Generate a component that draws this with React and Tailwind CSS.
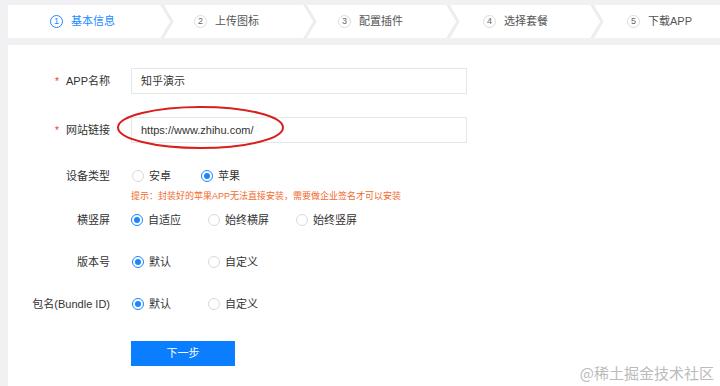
import React from "react";

const FONT = { fontFamily: '"Liberation Sans", "Noto Sans CJK SC", sans-serif' };

function Chevron() {
  return (
    <svg width="14" height="33" viewBox="0 0 14 33" className="shrink-0">
      <polyline points="1.5,-1 12,16.5 1.5,34" fill="none" stroke="#ededef" strokeWidth="3" />
    </svg>
  );
}

function Step({ n, label, active, className }) {
  return (
    <div className={"flex items-center h-full " + className}>
      <span
        className={
          "w-[13px] h-[13px] rounded-full border flex items-center justify-center text-[9px] leading-none " +
          (active ? "border-[#1a8cff] text-[#1a8cff]" : "border-[#dcdcdc] text-[#666]")
        }
      >
        {n}
      </span>
      <span className={"ml-[8px] text-[11px] " + (active ? "text-[#1a8cff]" : "text-[#555]")}>{label}</span>
    </div>
  );
}

function Radio({ checked, label }) {
  return (
    <div className="flex items-center">
      <span
        className={
          "w-[12px] h-[12px] rounded-full border bg-white flex items-center justify-center " +
          (checked ? "border-[#1a85ff]" : "border-[#dadada]")
        }
      >
        {checked && <span className="w-[6px] h-[6px] rounded-full bg-[#1a85ff]" />}
      </span>
      <span className="ml-[5px] text-[11px] text-[#333]">{label}</span>
    </div>
  );
}

function Label({ req, children }) {
  return (
    <div className="w-[102px] shrink-0 text-right text-[11px] text-[#333] pr-0">
      {req && <span className="text-[#f0302f] mr-[7px] text-[10px]">*</span>}
      {children}
    </div>
  );
}

export default function App() {
  return (
    <div className="w-[720px] h-[386px] overflow-hidden bg-[#f1f1f3] relative" style={FONT}>
      {/* Steps bar */}
      <div className="ml-[8px] mt-[5px] h-[33px] bg-white flex">
        <Step n="1" label="基本信息" active className="w-[152px] pl-[42px]" />
        <Chevron />
        <Step n="2" label="上传图标" className="w-[129px] pl-[20px]" />
        <Chevron />
        <Step n="3" label="配置插件" className="w-[129px] pl-[21px]" />
        <Chevron />
        <Step n="4" label="选择套餐" className="w-[130px] pl-[23px]" />
        <Chevron />
        <Step n="5" label="下载APP" className="flex-1 pl-[23px]" />
      </div>

      {/* Content panel */}
      <div className="ml-[8px] mt-[7px] h-[400px] bg-white pt-[23px] relative">
        <div className="flex items-center h-[26px]">
          <Label req>APP名称</Label>
          <div className="ml-[21px] w-[336px] h-[26px] border border-[#e6e6e6] flex items-center pl-[9px] text-[11px] text-[#333]">
            知乎演示
          </div>
        </div>

        <div className="flex items-center h-[26px] mt-[23px]">
          <Label req>网站链接</Label>
          <div className="ml-[21px] w-[336px] h-[26px] border border-[#e6e6e6] flex items-center pl-[9px] text-[11px] text-[#333]">
            https://www.zhihu.com/
          </div>
        </div>

        <div className="flex items-center h-[26px] mt-[20px]">
          <Label>设备类型</Label>
          <div className="ml-[22px] flex gap-[30px]">
            <Radio label="安卓" />
            <Radio checked label="苹果" />
          </div>
        </div>
        <div className="ml-[123px] h-[14px] leading-[14px] text-[9px] text-[#f26a2c]">
          提示：封装好的苹果APP无法直接安装，需要做企业签名才可以安装
        </div>

        <div className="flex items-center h-[26px] mt-[4px]">
          <Label>横竖屏</Label>
          <div className="ml-[21px] flex gap-[27px]">
            <Radio checked label="自适应" />
            <Radio label="始终横屏" />
            <Radio label="始终竖屏" />
          </div>
        </div>

        <div className="flex items-center h-[26px] mt-[16px]">
          <Label>版本号</Label>
          <div className="ml-[22px] flex gap-[37px]">
            <Radio checked label="默认" />
            <Radio label="自定义" />
          </div>
        </div>

        <div className="flex items-center h-[26px] mt-[16px]">
          <Label>包名(Bundle ID)</Label>
          <div className="ml-[22px] flex gap-[37px]">
            <Radio checked label="默认" />
            <Radio label="自定义" />
          </div>
        </div>

        <div className="ml-[123px] mt-[24px] w-[104px] h-[25px] bg-[#0b7dff] text-white text-[11px] flex items-center justify-center">
          下一步
        </div>

        {/* red annotation ellipse */}
        <svg className="absolute left-[108px] top-[60px]" width="170" height="46" viewBox="0 0 170 46">
          <ellipse cx="84.5" cy="22.5" rx="82.5" ry="20.5" fill="none" stroke="#d91e1e" strokeWidth="2" />
        </svg>
      </div>

      {/* watermark */}
      <div
        className="absolute right-[6px] top-[363px] text-[15px] leading-[20px] text-[#bbbbbb]"
        style={{ fontFamily: '"Noto Sans CJK SC", sans-serif' }}
      >
        @稀土掘金技术社区
      </div>
    </div>
  );
}
